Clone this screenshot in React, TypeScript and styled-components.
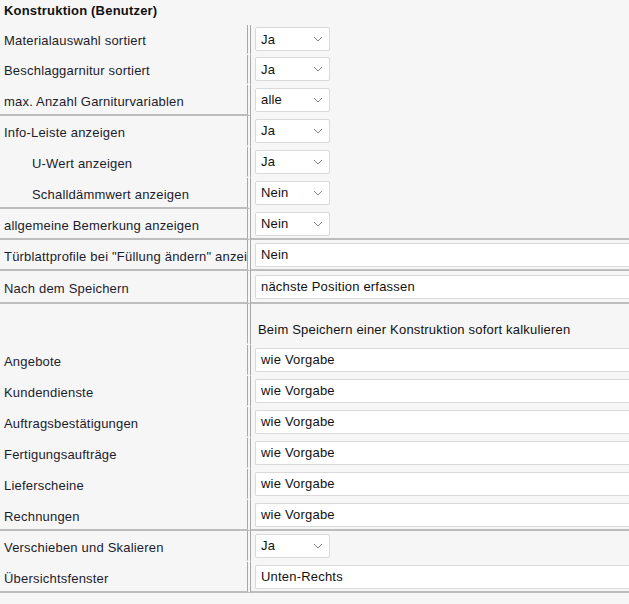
import React from "react";
import styled, { createGlobalStyle } from "styled-components";

const Global = createGlobalStyle`
  body { margin: 0; background: #f6f6f6; font-family: Tahoma, "Liberation Sans", "DejaVu Sans", sans-serif; font-size: 13px; letter-spacing: 0.2px; color: #1c1c2c; overflow: hidden; }
`;

const Title = styled.div`
  font-weight: bold; height: 25px; line-height: 22px; padding-left: 4px; color: #111;
`;

const Grid = styled.div`
  display: grid; grid-template-columns: 247px 1fr;
`;

const Label = styled.div<{ $h: number; $indent?: boolean; $sep?: boolean }>`
  height: ${(p) => p.$h}px; display: flex; align-items: center;
  padding-left: ${(p) => (p.$indent ? 32 : 4)}px; padding-top: 3px; white-space: nowrap; overflow: hidden;
  border-right: 4px double #a8a8a8; box-sizing: border-box; width: 251px;
  border-bottom: ${(p) => (p.$sep ? "2px solid #bdbdbd" : "2px solid transparent")};
`;

const Value = styled.div<{ $h: number; $sep?: boolean; $top?: boolean }>`
  height: ${(p) => p.$h}px; display: flex; align-items: ${(p) => (p.$top ? "flex-end" : "center")};
  padding-left: 4px; box-sizing: border-box; margin-left: 4px;
  padding-bottom: ${(p) => (p.$top ? 6 : 0)}px;
  border-bottom: ${(p) => (p.$sep ? "2px solid #bdbdbd" : "2px solid transparent")};
`;

const Select = styled.div`
  width: 75px; height: 24px; background: #fff; border: 1px solid #d9d9d9; border-radius: 2px;
  box-sizing: border-box; display: flex; align-items: center; justify-content: space-between;
  padding: 0 6px 0 5px; color: #111;
`;

const Input = styled.div`
  flex: 1; height: 24px; background: #fff; border: 1px solid #d9d9d9; border-right: none; border-radius: 2px 0 0 2px;
  box-sizing: border-box; display: flex; align-items: center; padding-left: 5px; color: #111;
`;

const Hint = styled.div`padding-left: 3px; color: #111;`;

const Chevron = () => (
  <svg width="10" height="6" viewBox="0 0 10 6"><path d="M1 1l4 4 4-4" fill="none" stroke="#888" strokeWidth="1" /></svg>
);

type Row = { label: string; h: number; kind: "sel" | "inp" | "hint"; v: string; indent?: boolean; sepL?: boolean; sepR?: boolean };

const rows: Row[] = [
  { label: "Materialauswahl sortiert", h: 30, kind: "sel", v: "Ja" },
  { label: "Beschlaggarnitur sortiert", h: 30, kind: "sel", v: "Ja" },
  { label: "max. Anzahl Garniturvariablen", h: 31, kind: "sel", v: "alle", sepL: true },
  { label: "Info-Leiste anzeigen", h: 31, kind: "sel", v: "Ja" },
  { label: "U-Wert anzeigen", h: 31, kind: "sel", v: "Ja", indent: true },
  { label: "Schalldämmwert anzeigen", h: 31, kind: "sel", v: "Nein", indent: true, sepL: true },
  { label: "allgemeine Bemerkung anzeigen", h: 31, kind: "sel", v: "Nein", sepL: true, sepR: true },
  { label: "Türblattprofile bei \"Füllung ändern\" anzeigen", h: 31, kind: "inp", v: "Nein", sepL: true, sepR: true },
  { label: "Nach dem Speichern", h: 33, kind: "inp", v: "nächste Position erfassen", sepL: true, sepR: true },
  { label: "", h: 41, kind: "hint", v: "Beim Speichern einer Konstruktion sofort kalkulieren" },
  { label: "Angebote", h: 31, kind: "inp", v: "wie Vorgabe" },
  { label: "Kundendienste", h: 31, kind: "inp", v: "wie Vorgabe" },
  { label: "Auftragsbestätigungen", h: 31, kind: "inp", v: "wie Vorgabe" },
  { label: "Fertigungsaufträge", h: 31, kind: "inp", v: "wie Vorgabe" },
  { label: "Lieferscheine", h: 31, kind: "inp", v: "wie Vorgabe" },
  { label: "Rechnungen", h: 31, kind: "inp", v: "wie Vorgabe", sepL: true, sepR: true },
  { label: "Verschieben und Skalieren", h: 31, kind: "sel", v: "Ja" },
  { label: "Übersichtsfenster", h: 31, kind: "inp", v: "Unten-Rechts", sepL: true, sepR: true },
];

export default function App() {
  return (
    <>
      <Global />
      <Title>Konstruktion (Benutzer)</Title>
      <Grid>
        {rows.map((r, i) => (
          <React.Fragment key={i}>
            <Label $h={r.h} $indent={r.indent} $sep={r.sepL}>{r.label}</Label>
            <Value $h={r.h} $sep={r.sepR} $top={r.kind === "hint"}>
              {r.kind === "sel" && (<Select><span>{r.v}</span><Chevron /></Select>)}
              {r.kind === "inp" && <Input>{r.v}</Input>}
              {r.kind === "hint" && <Hint>{r.v}</Hint>}
            </Value>
          </React.Fragment>
        ))}
      </Grid>
    </>
  );
}
